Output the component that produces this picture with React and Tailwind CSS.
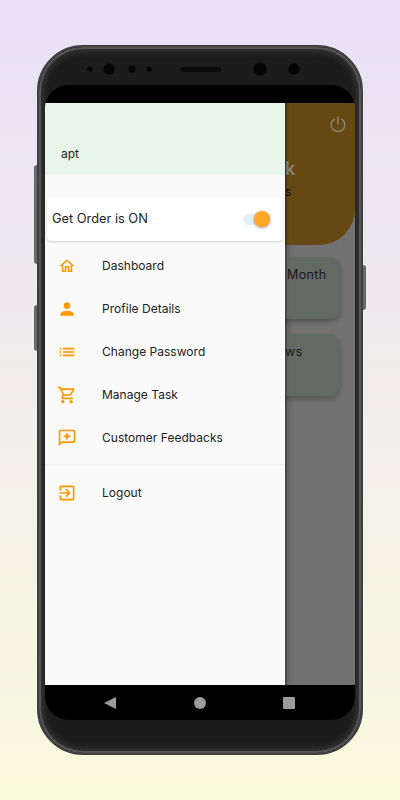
import React from 'react';

const ORANGE = '#FF9800';

const menuItems = [
  { label: 'Dashboard', size: 18, d: 'M12 5.69l5 4.5V18h-2v-6H9v6H7v-7.81l5-4.5M12 3L2 12h3v8h6v-6h2v6h6v-8h3L12 3z' },
  { label: 'Profile Details', size: 20, d: 'M12 12c2.21 0 4-1.79 4-4s-1.79-4-4-4-4 1.79-4 4 1.79 4 4 4zm0 2c-2.67 0-8 1.34-8 4v2h16v-2c0-2.66-5.33-4-8-4z' },
  { label: 'Change Password', size: 20, d: 'M3 13h2v-2H3v2zm0 4h2v-2H3v2zm0-8h2V7H3v2zm4 4h14v-2H7v2zm0 4h14v-2H7v2zM7 7v2h14V7H7z' },
  { label: 'Manage Task', size: 20, d: 'M15.55 13c.75 0 1.41-.41 1.75-1.03l3.58-6.49c.37-.66-.11-1.48-.87-1.48H5.21l-.94-2H1v2h2l3.6 7.59-1.35 2.44C4.52 15.37 5.48 17 7 17h12v-2H7l1.1-2h7.45zM6.16 6h12.15l-2.76 5H8.53L6.16 6zM7 18c-1.1 0-1.99.9-1.99 2S5.9 22 7 22s2-.9 2-2-.9-2-2-2zm10 0c-1.1 0-1.99.9-1.99 2s.89 2 1.99 2 2-.9 2-2-.9-2-2-2z' },
  { label: 'Customer Feedbacks', size: 20, d: 'M20 2H4c-1.1 0-2 .9-2 2v18l4-4h14c1.1 0 2-.9 2-2V4c0-1.1-.9-2-2-2zm0 14H5.17L4 17.17V4h16v12zM12 5l1.5 3.5L17 10l-3.5 1.5L12 15l-1.5-3.5L7 10l3.5-1.5z' },
];

const logoutIcon = 'M10.09 15.59L11.5 17l5-5-5-5-1.41 1.41L12.67 11H3v2h9.67l-2.58 2.59zM19 3H5c-1.11 0-2 .9-2 2v4h2V5h14v14H5v-4H3v4c0 1.1.89 2 2 2h14c1.1 0 2-.9 2-2V5c0-1.1-.9-2-2-2z';

const MenuRow = ({ label, size, d, height = 'h-[43px]' }) => (
  <div className={`flex items-center ${height}`}>
    <div className="w-[44px] flex justify-center shrink-0">
      <svg width={size} height={size} viewBox="0 0 24 24" fill={ORANGE}>
        <path fillRule="evenodd" d={d} />
      </svg>
    </div>
    <span className="ml-[13px] text-[12px] tracking-[0.02px] text-[#222]">{label}</span>
  </div>
);

const Lens = ({ className }) => (
  <div className={`rounded-full bg-[radial-gradient(circle,#050505_55%,#2a2a2a_100%)] shrink-0 ${className}`} />
);

export default function App() {
  return (
    <div className="w-[400px] h-[800px] bg-gradient-to-b from-[#E9E0F8] to-[#FAFADC] pt-[45px] pl-[37px] font-['Inter',sans-serif]">
      <div className="relative w-[326px] h-[710px]">
        {/* side buttons */}
        <div className="absolute left-[-3px] top-[120px] w-[3px] h-[99px] bg-[#6a6a6a] rounded-l-sm" />
        <div className="absolute left-[-3px] top-[260px] w-[3px] h-[46px] bg-[#6a6a6a] rounded-l-sm" />
        <div className="absolute right-[-3px] top-[220px] w-[3px] h-[45px] bg-[#6a6a6a] rounded-r-sm" />

        <div className="w-full h-full rounded-[46px] bg-[#1c1c1c] border-[2px] border-[#3f3f3f] flex flex-col px-[6px] shadow-[inset_0_0_0_2px_#565656,inset_0_0_7px_4px_#3a3a3a]">
          {/* earpiece row */}
          <div className="h-[38px] flex items-center pt-[6px]">
            <Lens className="w-[6px] h-[6px] ml-[42px]" />
            <Lens className="w-[12px] h-[12px] ml-[10px]" />
            <Lens className="w-[8px] h-[8px] ml-[13px]" />
            <Lens className="w-[6px] h-[6px] ml-[10px]" />
            <div className="w-[41px] h-[5px] rounded-full bg-[#0c0c0c] ml-[28px] shrink-0" />
            <Lens className="w-[14px] h-[14px] ml-[32px]" />
            <Lens className="w-[12px] h-[12px] ml-[21px]" />
          </div>

          {/* screen */}
          <div className="h-[635px] bg-black rounded-[24px] overflow-hidden flex flex-col shrink-0">
            <div className="h-[18px] shrink-0" />
            <div className="h-[582px] flex shrink-0">
              {/* drawer */}
              <div className="w-[240px] h-full bg-[#FAFAFA] shrink-0 relative z-10 shadow-[1px_0_3px_rgba(0,0,0,0.5)] flex flex-col">
                <div className="h-[72px] bg-[#E8F5E9] flex items-end pl-[16px] pb-[12px]">
                  <span className="text-[12px] text-[#222]">apt</span>
                </div>
                <div className="mt-[22px] mx-[2px] h-[44px] bg-white rounded-[4px] shadow-[0_1px_2px_rgba(0,0,0,0.18)] flex items-center justify-between pl-[5px] pr-[14px]">
                  <span className="text-[12.8px] text-[#222]">Get Order is ON</span>
                  <div className="relative w-[26px] h-[11px] rounded-full bg-[#E3F0FA]">
                    <div className="absolute right-[-1px] top-[-3px] w-[16px] h-[16px] rounded-full bg-[#FFA726] shadow-[0_1px_3px_rgba(0,0,0,0.4)]" />
                  </div>
                </div>
                <div className="mt-[3px]">
                  {menuItems.map((item) => (
                    <MenuRow key={item.label} {...item} />
                  ))}
                </div>
                <div className="mt-[5px] h-px bg-[#F0F0F0]" />
                <MenuRow label="Logout" size={20} d={logoutIcon} height="h-[55px]" />
              </div>

              {/* page behind the drawer, dimmed */}
              <div className="flex-1 min-w-0 overflow-hidden flex flex-col bg-gradient-to-r from-[#626262] to-[#727272] to-[10px]">
                <div className="h-[142px] bg-[#654812] rounded-br-[36px] flex flex-col items-end shrink-0">
                  <svg className="mt-[12px] mr-[8px]" width="18" height="18" viewBox="0 0 24 24" fill="none" stroke="#85857c" strokeWidth="2" strokeLinecap="round">
                    <path d="M12 3v9" />
                    <path d="M7 5.6a9 9 0 1 0 10 0" />
                  </svg>
                  <div className="w-full pt-[24px] text-[18px] leading-[24px] font-semibold text-[#85857c]">k</div>
                  <div className="w-full pt-[3px] text-[12px] leading-[16px] text-[#111]">s</div>
                </div>
                <div className="mt-[12px] mr-[15px] h-[62px] rounded-r-[10px] bg-[#636963] shadow-[0_3px_5px_rgba(0,0,0,0.25)] pt-[9px] text-[12.5px] tracking-[0.4px] text-[#1a1a1a] shrink-0">
                  <span className="pl-[2px]">Month</span>
                </div>
                <div className="mt-[15px] mr-[15px] h-[62px] rounded-r-[10px] bg-[#636963] shadow-[0_3px_5px_rgba(0,0,0,0.25)] pt-[9px] text-[12.5px] tracking-[0.4px] text-[#1a1a1a] shrink-0">
                  <span>ws</span>
                </div>
              </div>
            </div>

            {/* android nav */}
            <div className="h-[35px] flex items-center justify-between pl-[59px] pr-[60px] shrink-0">
              <svg width="12" height="12" viewBox="0 0 12 12" fill="#9b9b9b"><path d="M12 0v12L0 6z" /></svg>
              <div className="w-[12px] h-[12px] rounded-full bg-[#9b9b9b]" />
              <div className="w-[12px] h-[12px] rounded-[1px] bg-[#9b9b9b]" />
            </div>
          </div>
        </div>
      </div>
    </div>
  );
}
